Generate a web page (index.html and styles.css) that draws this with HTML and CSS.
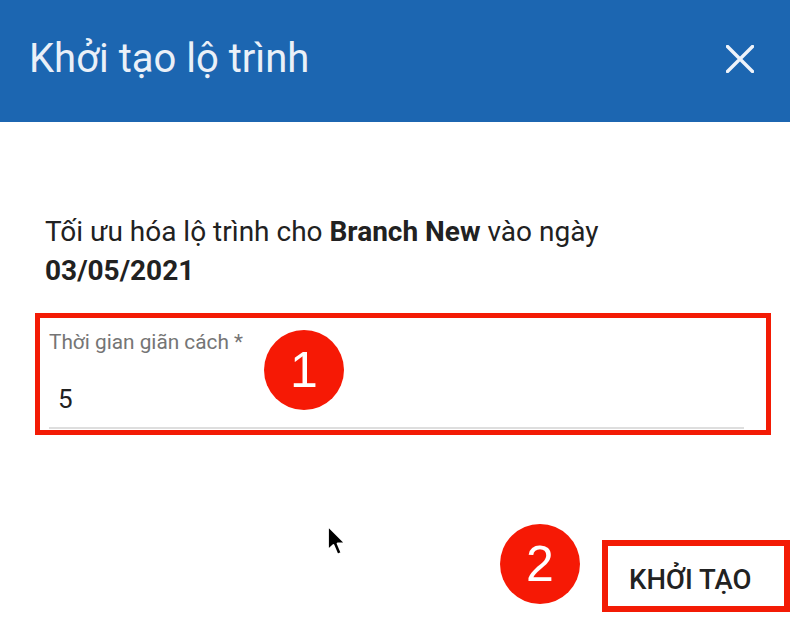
FILE: index.html
```html
<!DOCTYPE html>
<html lang="vi">
<head>
<meta charset="utf-8">
<title>Khởi tạo lộ trình</title>
<link rel="stylesheet" href="styles.css">
</head>
<body>
<div class="dialog">
  <header class="dialog-header">
    <h1 class="dialog-title">Khởi tạo lộ trình</h1>
    <button class="close-btn" aria-label="Đóng">
      <svg width="28" height="28" viewBox="0 0 28 28"><path d="M1.5 1.5 L26.5 26.5 M26.5 1.5 L1.5 26.5" stroke="#eef3fa" stroke-width="3.4" fill="none" stroke-linecap="square"/></svg>
    </button>
  </header>
  <main class="dialog-body">
    <p class="intro">Tối ưu hóa lộ trình cho <b>Branch New</b> vào ngày <b>03/05/2021</b></p>
    <div class="field-wrap">
      <div class="field">
        <label class="field-label">Thời gian giãn cách *</label>
        <div class="field-value">5</div>
        <div class="field-line"></div>
      </div>
      <span class="badge badge-1">1</span>
    </div>
    <div class="actions">
      <span class="badge badge-2">2</span>
      <button class="submit">KHỞI TẠO</button>
    </div>
    <svg class="cursor" width="24" height="34" viewBox="0 0 24 34">
      <path d="M2 2 L2 26 L7.5 21 L11.5 30.5 L15.5 28.8 L11.5 19.5 L19.5 19.5 Z" fill="#000" stroke="#fff" stroke-width="1.8" stroke-linejoin="round"/>
    </svg>
  </main>
</div>
</body>
</html>
```
FILE: styles.css
```css
* { box-sizing: border-box; }
html, body { margin: 0; padding: 0; background: #fff; }
body {
  width: 790px;
  height: 630px;
  overflow: hidden;
  font-family: Roboto, "Liberation Sans", sans-serif;
  color: #212121;
}
.dialog { position: relative; width: 790px; height: 630px; }
.dialog-header {
  height: 122px;
  background: #1c66b1;
  display: flex;
  align-items: center;
  justify-content: space-between;
  padding: 0 36px 0 29px;
}
.dialog-title {
  margin: 0;
  font-weight: 400;
  font-size: 40px;
  color: #eaf0f8;
  padding-bottom: 6px;
}
.close-btn {
  background: none;
  border: 0;
  padding: 0;
  width: 28px;
  height: 28px;
  display: flex;
  margin-bottom: 5px;
}
.dialog-body { position: relative; padding: 90px 0 0 0; }
.intro {
  margin: 0 0 0 45px;
  font-size: 28px;
  line-height: 39px;
  width: 620px;
}
.intro b { font-weight: 700; }
.field-wrap { position: relative; margin-top: 23px; }
.field {
  margin-left: 35px;
  width: 736px;
  height: 122px;
  border: 5px solid #f31b05;
  padding: 12px 22px 0 9px;
}
.field-label {
  display: block;
  font-size: 20.8px;
  line-height: 24px;
  color: #757575;
}
.field-value {
  font-size: 26px;
  line-height: 30px;
  margin-top: 30px;
  padding-left: 9px;
  color: #212121;
}
.field-line {
  margin-top: 13px;
  height: 2px;
  background: #dedede;
}
.badge {
  position: absolute;
  width: 80px;
  height: 80px;
  border-radius: 50%;
  background: #f61905;
  color: #fff;
  font-family: "Liberation Sans", Arial, sans-serif;
  font-size: 50px;
  line-height: 80px;
  text-align: center;
}
.badge-1 { left: 264px; top: 17px; }
.actions {
  position: relative;
  margin-top: 105px;
  display: flex;
  justify-content: flex-end;
}
.badge-2 { left: 500px; top: -16px; }
.submit {
  width: 188px;
  height: 72px;
  border: 6px solid #f31b05;
  background: #fff;
  font-family: Roboto, "Liberation Sans", sans-serif;
  font-weight: 500;
  font-size: 27.5px;
  color: #222;
  text-align: left;
  padding: 6px 0 0 21px;
  white-space: nowrap;
}
.cursor { position: absolute; left: 326px; top: 402px; }
```
